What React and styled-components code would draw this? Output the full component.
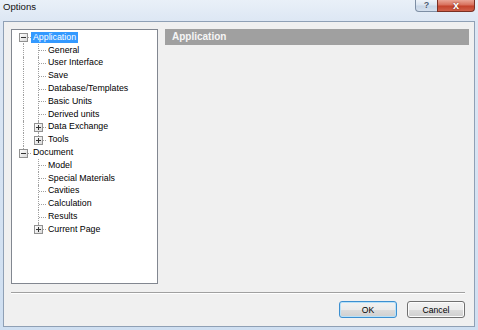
import React from "react";
import styled, { createGlobalStyle } from "styled-components";

const Global = createGlobalStyle`
  html, body { margin: 0; padding: 0; }
  body { width: 478px; height: 330px; overflow: hidden; background: #d6e3f2; }
  * { box-sizing: border-box; }
`;

const Window = styled.div`
  width: 478px;
  height: 330px;
  display: flex;
  flex-direction: column;
  background: linear-gradient(#e9f0f8 0px, #dde7f4 21px, #cfdff1 100%);
  font-family: "Liberation Sans", Arial, sans-serif;
`;

const TitleBar = styled.div`
  height: 21px;
  flex: 0 0 21px;
  display: flex;
  justify-content: space-between;
  align-items: flex-start;
  padding: 0 3px 0 3px;
`;

const Title = styled.div`
  font-size: 9.6px;
  line-height: 12px;
  padding-top: 1px;
  color: #111;
`;

const CaptionButtons = styled.div`
  display: flex;
  height: 12px;
`;

const CaptionButton = styled.div`
  width: ${(p) => p.$w}px;
  height: 12px;
  display: flex;
  align-items: center;
  justify-content: center;
  border: 1px solid ${(p) => (p.$close ? "#7a3024" : "#7d8ea4")};
  border-top: none;
  border-radius: ${(p) => (p.$close ? "0 0 4px 0" : "0 0 0 4px")};
  margin-left: ${(p) => (p.$close ? "-1px" : "0")};
  background: ${(p) =>
    p.$close
      ? "linear-gradient(#e9a596 0%, #d8705c 45%, #c4432c 55%, #d0614a 100%)"
      : "linear-gradient(#eef3f9 0%, #dbe5f1 45%, #c7d5e6 55%, #d5e0ee 100%)"};
  color: ${(p) => (p.$close ? "#fff" : "#4a5b72")};
  font-size: ${(p) => (p.$close ? "11px" : "9px")};
  font-weight: bold;
  line-height: 1;
  text-shadow: ${(p) => (p.$close ? "0 0 2px #6b1e12" : "0 0 1px #fff")};
`;

const ClientWrap = styled.div`
  flex: 1;
  display: flex;
  padding: 0 3px 3px 3px;
`;

const Client = styled.div`
  flex: 1;
  display: flex;
  flex-direction: column;
  background: #f0f0f0;
  border: 1px solid #8fa0b5;
  padding: 7px 5px 8px 7px;
`;

const Main = styled.div`
  display: flex;
  gap: 7px;
  height: 255px;
`;

const Tree = styled.div`
  width: 147px;
  height: 255px;
  background: #fff;
  border: 1px solid #828790;
  padding: 1px 0 0 4px;
  display: flex;
  flex-direction: column;
  font-size: 8.8px;
  color: #000;
`;

const Row = styled.div`
  height: 12.8px;
  flex: 0 0 12.8px;
  display: flex;
  align-items: stretch;
`;

const Cell = styled.span`
  position: relative;
  flex: 0 0 15px;
  &::before {
    content: "";
    display: ${(p) => (p.$up || p.$down ? "block" : "none")};
    position: absolute;
    left: 7px;
    top: ${(p) => (p.$up ? "0" : "50%")};
    bottom: ${(p) => (p.$down ? "0" : "50%")};
    border-left: 1px dotted #a0a0a0;
  }
  &::after {
    content: "";
    display: ${(p) => (p.$h ? "block" : "none")};
    position: absolute;
    left: 8px;
    right: 0;
    top: 50%;
    border-top: 1px dotted #a0a0a0;
  }
`;

const BoxIcon = styled.svg`
  position: absolute;
  left: 3px;
  top: 50%;
  margin-top: -4px;
  z-index: 1;
`;

const Label = styled.span`
  align-self: center;
  height: 11px;
  line-height: 11px;
  padding: 0 2px;
  white-space: nowrap;
  background: ${(p) => (p.$selected ? "#3399ff" : "transparent")};
  color: ${(p) => (p.$selected ? "#fff" : "#000")};
`;

const Panel = styled.div`
  flex: 1;
  display: flex;
  flex-direction: column;
`;

const PanelHeader = styled.div`
  height: 16px;
  background: #a0a0a0;
  color: #f6f6f6;
  font-weight: bold;
  font-size: 10px;
  line-height: 16px;
  padding-left: 7px;
`;

const Separator = styled.div`
  margin: 8px 4px 0 0;
  height: 2px;
  border-top: 1px solid #a0a0a0;
  border-bottom: 1px solid #ffffff;
`;

const Footer = styled.div`
  margin: 7px 4px 0 0;
  display: flex;
  justify-content: flex-end;
  gap: 10px;
`;

const Button = styled.button`
  width: 58px;
  height: 17px;
  padding: 0;
  font-family: "Liberation Sans", Arial, sans-serif;
  font-size: 8.6px;
  color: #000;
  border-radius: 3px;
  border: 1px solid ${(p) => (p.$default ? "#3c8fd0" : "#707070")};
  background: linear-gradient(#f2f2f2 0%, #ebebeb 50%, #dddddd 50%, #cfcfcf 100%);
  box-shadow: inset 0 0 0 1px ${(p) => (p.$default ? "#b8e1f8" : "#fcfcfc")};
`;

function ExpandBox({ open }) {
  return (
    <BoxIcon width="9" height="9" viewBox="0 0 9 9">
      <defs>
        <linearGradient id="bx" x1="0" y1="0" x2="1" y2="1">
          <stop offset="0" stopColor="#ffffff" />
          <stop offset="1" stopColor="#d8d8d8" />
        </linearGradient>
      </defs>
      <rect x="0.5" y="0.5" width="8" height="8" fill="url(#bx)" stroke="#919191" />
      <line x1="2" y1="4.5" x2="7" y2="4.5" stroke="#333" />
      {!open && <line x1="4.5" y1="2" x2="4.5" y2="7" stroke="#333" />}
    </BoxIcon>
  );
}

const groups = [
  {
    label: "Application",
    selected: true,
    children: [
      { label: "General" },
      { label: "User Interface" },
      { label: "Save" },
      { label: "Database/Templates" },
      { label: "Basic Units" },
      { label: "Derived units" },
      { label: "Data Exchange", box: true },
      { label: "Tools", box: true },
    ],
  },
  {
    label: "Document",
    children: [
      { label: "Model" },
      { label: "Special Materials" },
      { label: "Cavities" },
      { label: "Calculation" },
      { label: "Results" },
      { label: "Current Page", box: true },
    ],
  },
];

export default function App() {
  const rows = [];
  groups.forEach((g, gi) => {
    const lastRoot = gi === groups.length - 1;
    rows.push(
      <Row key={g.label}>
        <Cell $up={gi > 0} $down={!lastRoot} $h>
          <ExpandBox open />
        </Cell>
        <Label $selected={g.selected}>{g.label}</Label>
      </Row>
    );
    g.children.forEach((c, ci) => {
      const lastChild = ci === g.children.length - 1;
      rows.push(
        <Row key={g.label + c.label}>
          <Cell $up={!lastRoot} $down={!lastRoot} />
          <Cell $up $down={!lastChild} $h>
            {c.box && <ExpandBox open={false} />}
          </Cell>
          <Label>{c.label}</Label>
        </Row>
      );
    });
  });

  return (
    <>
      <Global />
      <Window>
        <TitleBar>
          <Title>Options</Title>
          <CaptionButtons>
            <CaptionButton $w={23}>?</CaptionButton>
            <CaptionButton $w={38} $close>
              x
            </CaptionButton>
          </CaptionButtons>
        </TitleBar>
        <ClientWrap>
          <Client>
            <Main>
              <Tree>{rows}</Tree>
              <Panel>
                <PanelHeader>Application</PanelHeader>
              </Panel>
            </Main>
            <Separator />
            <Footer>
              <Button $default>OK</Button>
              <Button>Cancel</Button>
            </Footer>
          </Client>
        </ClientWrap>
      </Window>
    </>
  );
}
